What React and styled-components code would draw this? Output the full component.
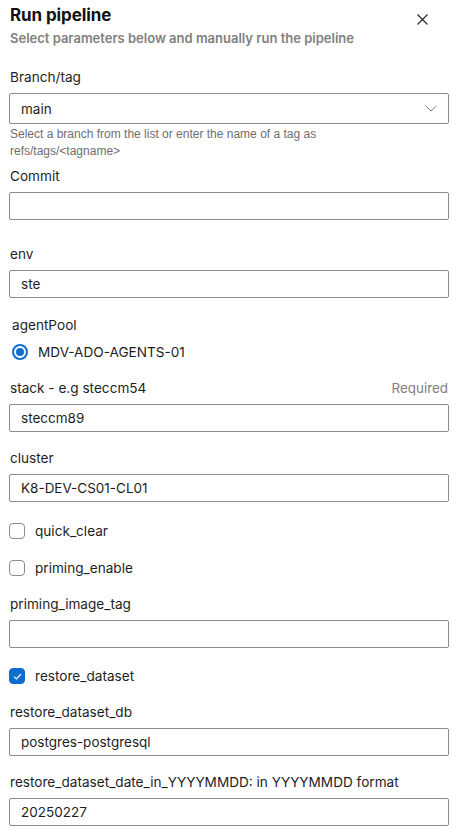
import React from 'react';
import styled, { createGlobalStyle } from 'styled-components';

const GlobalStyle = createGlobalStyle`
  html, body {
    margin: 0;
    padding: 0;
    background: #fff;
  }
  body {
    font-family: Inter, "Noto Sans", "Liberation Sans", sans-serif;
    color: #1e1e1e;
    -webkit-font-smoothing: antialiased;
  }
`;

const Panel = styled.div`
  width: 465px;
  box-sizing: border-box;
  padding: 4px 16px 20px 9px;
  display: flex;
  flex-direction: column;
`;

const Header = styled.header`
  display: flex;
  justify-content: space-between;
  align-items: flex-start;
  padding-left: 1px;
`;

const Titles = styled.div`
  display: flex;
  flex-direction: column;
  gap: 3px;
`;

const Title = styled.h1`
  margin: 0;
  font-size: 17px;
  line-height: 22px;
  font-weight: 700;
  color: #111;
  letter-spacing: -0.1px;
`;

const Subtitle = styled.p`
  margin: 0;
  font-size: 13px;
  line-height: 18px;
  font-weight: 600;
  color: #808080;
`;

const CloseButton = styled.button`
  border: 0;
  background: none;
  padding: 0;
  margin: 9px 21px 0 0;
  width: 12px;
  height: 12px;
  display: flex;
  align-items: center;
  justify-content: center;
  cursor: pointer;
`;

const Field = styled.div`
  display: flex;
  flex-direction: column;
  margin-top: ${p => p.$mt}px;
`;

const LabelRow = styled.div`
  display: flex;
  justify-content: space-between;
  align-items: center;
  padding-left: ${p => (p.$indent ? 3 : 1)}px;
  font-size: 13.6px;
  line-height: 20px;
  color: #1e1e1e;
`;

const Required = styled.span`
  color: #808080;
  font-size: 13.4px;
  padding-right: 1px;
`;

const TextBox = styled.div`
  margin-top: ${p => p.$mt ?? 6}px;
  height: ${p => p.$h ?? 28}px;
  box-sizing: border-box;
  border: 1px solid #8c8c8c;
  border-radius: 2px;
  display: flex;
  align-items: center;
  justify-content: space-between;
  padding: 0 11px 0 11px;
  font-size: 13.5px;
  color: #1e1e1e;
`;

const Help = styled.p`
  margin: 2px 0 0 1px;
  font-family: "Liberation Sans", Arial, sans-serif;
  font-size: 12px;
  line-height: 17px;
  color: #6e6e6e;
`;

const OptionRow = styled.label`
  display: flex;
  align-items: center;
  gap: ${p => p.$gap}px;
  height: 20px;
  margin-top: ${p => p.$mt}px;
  padding-left: ${p => p.$pl}px;
  font-size: 13.6px;
  color: #1e1e1e;
`;

const Radio = styled.span`
  width: 16px;
  height: 16px;
  box-sizing: border-box;
  border-radius: 50%;
  border: 2px solid #0f6cd1;
  display: flex;
  align-items: center;
  justify-content: center;
  &::after {
    content: '';
    width: 8px;
    height: 8px;
    border-radius: 50%;
    background: #0f6cd1;
  }
`;

const Box = styled.span`
  width: 16px;
  height: 16px;
  box-sizing: border-box;
  border-radius: 4px;
  border: 1px solid ${p => (p.$checked ? '#0f6cd1' : '#8c8c8c')};
  background: ${p => (p.$checked ? '#0f6cd1' : '#fff')};
  display: flex;
  align-items: center;
  justify-content: center;
`;

const CloseIcon = () => (
  <svg width="11" height="11" viewBox="0 0 11 11">
    <path d="M0.5 0.5 L10.5 10.5 M10.5 0.5 L0.5 10.5" stroke="#2b2b2b" strokeWidth="1.2" fill="none" />
  </svg>
);

const Chevron = () => (
  <svg width="12" height="7" viewBox="0 0 12 7">
    <path d="M0.5 0.8 L6 6 L11.5 0.8" stroke="#7a7a7a" strokeWidth="1" fill="none" />
  </svg>
);

const Check = () => (
  <svg width="9" height="7" viewBox="0 0 9 7">
    <path d="M1 3.6 L3.4 6 L8 1" stroke="#fff" strokeWidth="1.2" fill="none" />
  </svg>
);

const Checkbox = ({ checked, label, mt }) => (
  <OptionRow $mt={mt} $gap={10} $pl={0}>
    <Box $checked={checked}>{checked && <Check />}</Box>
    {label}
  </OptionRow>
);

const TextField = ({ label, value, mt, required }) => (
  <Field $mt={mt}>
    <LabelRow>
      <span>{label}</span>
      {required && <Required>Required</Required>}
    </LabelRow>
    <TextBox>{value}</TextBox>
  </Field>
);

export default function App() {
  return (
    <>
      <GlobalStyle />
      <Panel>
        <Header>
          <Titles>
            <Title>Run pipeline</Title>
            <Subtitle>Select parameters below and manually run the pipeline</Subtitle>
          </Titles>
          <CloseButton aria-label="Close"><CloseIcon /></CloseButton>
        </Header>

        <Field $mt={20}>
          <LabelRow><span>Branch/tag</span></LabelRow>
          <TextBox $h={31}>
            main
            <Chevron />
          </TextBox>
          <Help>
            Select a branch from the list or enter the name of a tag as
            <br />
            refs/tags/&lt;tagname&gt;
          </Help>
        </Field>

        <TextField label="Commit" value="" mt={6} />
        <TextField label="env" value="ste" mt={24} />

        <Field $mt={17}>
          <LabelRow $indent><span>agentPool</span></LabelRow>
          <OptionRow $mt={7} $gap={10} $pl={3}>
            <Radio />
            MDV-ADO-AGENTS-01
          </OptionRow>
        </Field>

        <TextField label="stack - e.g steccm54" value="steccm89" mt={16} required />
        <TextField label="cluster" value="K8-DEV-CS01-CL01" mt={16} />

        <Checkbox label="quick_clear" mt={19} />
        <Checkbox label="priming_enable" mt={17} />

        <TextField label="priming_image_tag" value="" mt={16} />

        <Checkbox label="restore_dataset" checked mt={18} />

        <TextField label="restore_dataset_db" value="postgres-postgresql" mt={16} />
        <TextField
          label="restore_dataset_date_in_YYYYMMDD: in YYYYMMDD format"
          value="20250227"
          mt={16}
        />
      </Panel>
    </>
  );
}
